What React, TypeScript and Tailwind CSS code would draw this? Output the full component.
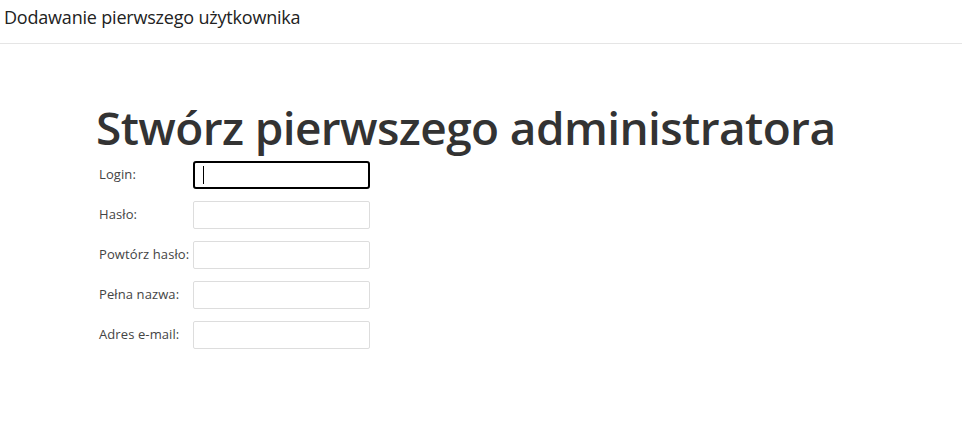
const fields = [
  { label: "Login:", type: "text", focused: true },
  { label: "Hasło:", type: "password" },
  { label: "Powtórz hasło:", type: "password" },
  { label: "Pełna nazwa:", type: "text" },
  { label: "Adres e-mail:", type: "email" },
];

export default function App() {
  return (
    <div className="min-h-[431px] bg-white text-[#333] font-['Open_Sans',sans-serif]">
      <div className="h-[44px] border-b border-[#e5e5e5] px-[4px] flex items-center">
        <span className="text-[18px] text-[#222] tracking-[-0.2px] -mt-[8px]">
          Dodawanie pierwszego użytkownika
        </span>
      </div>

      <div className="ml-[96px] pt-[52px]">
        <h1 className="text-[46px] font-semibold leading-[62px] text-[#333] tracking-[-0.6px]">
          Stwórz pierwszego administratora
        </h1>
        <form className="flex flex-col gap-[12px] mt-[3px]">
          {fields.map((f) => (
            <div key={f.label} className="flex items-center">
              <label className="w-[97px] pl-[3px] text-[13px] text-[#444] whitespace-nowrap tracking-[0.1px]">
                {f.label}
              </label>
              {f.focused ? (
                <div className="relative">
                  <input
                    type={f.type}
                    className="w-[177px] h-[28px] border-2 border-black rounded-[3px] outline-none"
                  />
                  <span className="absolute left-[10px] top-[5px] w-px h-[18px] bg-black" />
                </div>
              ) : (
                <input
                  type={f.type}
                  className="w-[177px] h-[28px] border border-[#ddd] rounded-[2px] outline-none"
                />
              )}
            </div>
          ))}
        </form>
      </div>
    </div>
  );
}
